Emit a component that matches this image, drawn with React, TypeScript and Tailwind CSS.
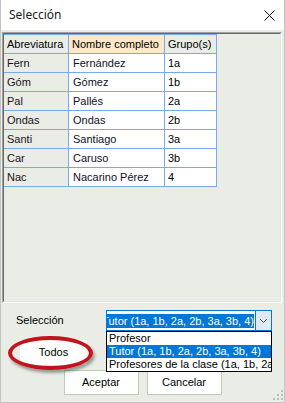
const ROWS = [
  { abr: "Fern", nombre: "Fernández", grupo: "1a" },
  { abr: "Góm", nombre: "Gómez", grupo: "1b" },
  { abr: "Pal", nombre: "Pallés", grupo: "2a" },
  { abr: "Ondas", nombre: "Ondas", grupo: "2b" },
  { abr: "Santi", nombre: "Santiago", grupo: "3a" },
  { abr: "Car", nombre: "Caruso", grupo: "3b" },
  { abr: "Nac", nombre: "Nacarino Pérez", grupo: "4" },
];

const OPTIONS = [
  "Profesor",
  "Tutor (1a, 1b, 2a, 2b, 3a, 3b, 4)",
  "Profesores de la clase (1a, 1b, 2a, 2b, 3a, 3b, 4)",
];

export default function App() {
  return (
    <div className="w-[285px] h-[403px] flex flex-col border-x border-b border-[#c4c4c4] font-['Liberation_Sans',Arial,sans-serif] text-[11px] text-black overflow-hidden">
      {/* Title bar */}
      <div className="h-[30px] bg-white flex items-center pl-[8px] pr-[9px] shrink-0">
        <span className="flex-1 font-['Noto_Sans',sans-serif] text-[12px] text-[#1a1a1a]">Selección</span>
        <svg width="11" height="11" viewBox="0 0 11 11">
          <path d="M0.5 0.5 L10.5 10.5 M10.5 0.5 L0.5 10.5" stroke="#111" strokeWidth="1" />
        </svg>
      </div>

      {/* Body */}
      <div className="flex-1 bg-[#e9ede5] flex flex-col">
        {/* Grid */}
        <div className="mt-[2px] ml-[1px] mr-[2px] h-[271px] border-t border-l border-[#a0a0a0] border-b border-r border-b-white border-r-white shrink-0">
          <div className="h-full border-t border-l border-[#696969] border-b border-r border-b-[#e3e3e3] border-r-[#e3e3e3]">
            <div className="flex">
              <div className="w-[65px] h-[20px] border-y border-r border-[#78a8ee] pl-[3px] leading-[18px]">Abreviatura</div>
              <div className="w-[96px] h-[20px] border-y border-r border-[#78a8ee] bg-[#fee8c8] pl-[3px] leading-[18px]">Nombre completo</div>
              <div className="w-[52px] h-[20px] border-y border-r border-[#78a8ee] pl-[3px] leading-[18px]">Grupo(s)</div>
            </div>
            {ROWS.map(r => (
              <div key={r.abr} className="flex">
                <div className="w-[65px] h-[19px] border-b border-r border-[#78a8ee] pl-[3px] leading-[18px] text-[#1c1020]">{r.abr}</div>
                <div className="w-[96px] h-[19px] border-b border-r border-[#78a8ee] bg-white pl-[4px] leading-[18px] text-[#10102a]">{r.nombre}</div>
                <div className="w-[52px] h-[19px] border-b border-r border-[#78a8ee] bg-white pl-[3px] leading-[18px]">{r.grupo}</div>
              </div>
            ))}
          </div>
        </div>

        {/* Bottom controls */}
        <div className="relative flex-1 flex flex-col">
          <div className="flex items-center mt-[7px] pl-[15px]">
            <span className="w-[90px]">Selección</span>
            <div className="w-[166px] h-[21px] border border-[#0078d7] bg-white flex">
              <div className="flex-1 overflow-hidden flex justify-end items-center pr-[1px]">
                <span className="whitespace-nowrap bg-[#0078d7] text-white leading-[14px]">Tutor (1a, 1b, 2a, 2b, 3a, 3b, 4)</span>
              </div>
              <div className="w-[16px] bg-[#e0e9f4] border-l border-[#0078d7] flex items-center justify-center">
                <svg width="9" height="6" viewBox="0 0 9 6">
                  <polyline points="1,1 4.5,4.5 8,1" fill="none" stroke="#505050" strokeWidth="1" />
                </svg>
              </div>
            </div>
          </div>

          <div className="mt-[9px] ml-[19px] w-[67px] h-[25px] bg-white flex items-center justify-center">Todos</div>

          <div className="mt-[5px] flex justify-center gap-[8px]">
            <div className="w-[75px] h-[25px] bg-white border border-[#b9cfae] flex items-center justify-center">Aceptar</div>
            <div className="w-[75px] h-[25px] bg-white border border-[#b9cfae] flex items-center justify-center">Cancelar</div>
          </div>

          {/* Open dropdown list */}
          <div className="absolute top-[28px] left-[105px] w-[166px] h-[41px] bg-white border border-black overflow-hidden z-10">
            {OPTIONS.map((o, i) => (
              <div
                key={o}
                className={`h-[13px] leading-[13px] pl-[2px] whitespace-nowrap ${i === 1 ? "bg-[#0078d7] text-white" : ""}`}
              >
                {o}
              </div>
            ))}
          </div>

          {/* Red annotation ellipse */}
          <div className="absolute top-[33px] left-[7px] w-[85px] h-[34px] rounded-[50%] border-[4px] border-[#c1141c] shadow-[2px_3px_3px_rgba(0,0,0,0.35)] pointer-events-none" />

          {/* Resize grip */}
          <svg className="absolute right-[1px] bottom-[2px]" width="10" height="10" viewBox="0 0 10 10">
            <rect x="8" y="0" width="2" height="2" fill="#bcbcbc" />
            <rect x="4" y="4" width="2" height="2" fill="#bcbcbc" />
            <rect x="8" y="4" width="2" height="2" fill="#bcbcbc" />
            <rect x="0" y="8" width="2" height="2" fill="#bcbcbc" />
            <rect x="4" y="8" width="2" height="2" fill="#bcbcbc" />
            <rect x="8" y="8" width="2" height="2" fill="#bcbcbc" />
          </svg>
        </div>
      </div>
    </div>
  );
}
